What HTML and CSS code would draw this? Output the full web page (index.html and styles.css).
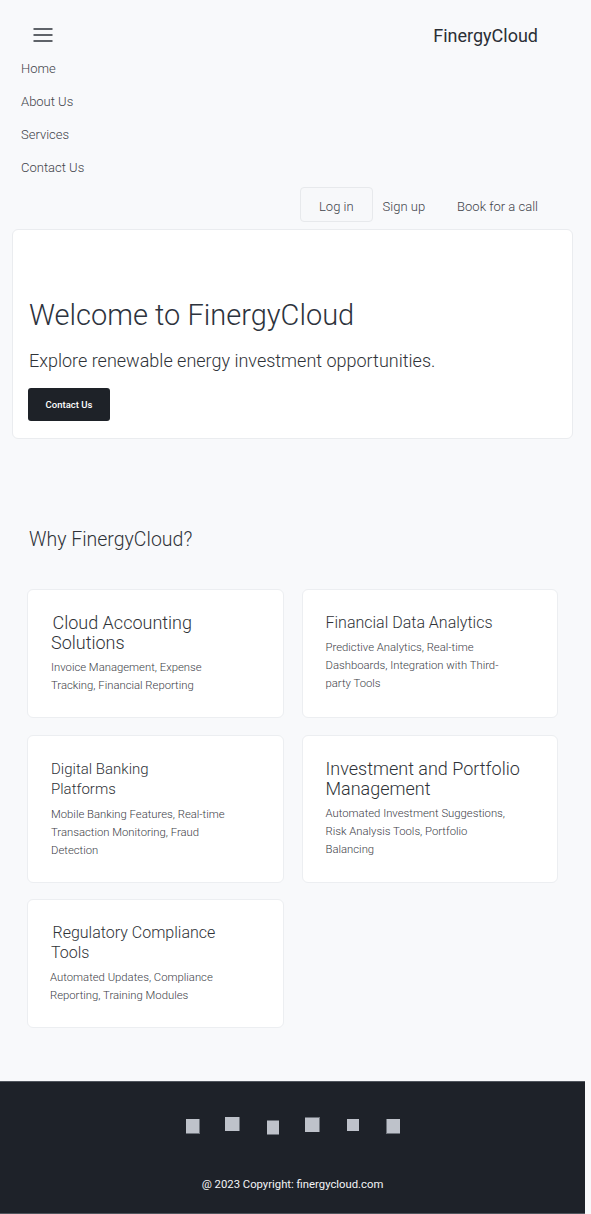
FILE: index.html
```html
<!DOCTYPE html>
<html lang="en">
<head>
<meta charset="utf-8">
<title>FinergyCloud</title>
<link rel="stylesheet" href="styles.css">
</head>
<body>
<header class="topbar">
  <button class="burger" aria-label="Menu">
    <svg width="20" height="16" viewBox="0 0 20 16"><path d="M0.5 2h19M0.5 8h19M0.5 14h19" stroke="#5f6369" stroke-width="1.8" fill="none"/></svg>
  </button>
  <div class="brand">FinergyCloud</div>
</header>
<nav class="menu">
  <a href="#">Home</a>
  <a href="#">About Us</a>
  <a href="#">Services</a>
  <a href="#">Contact Us</a>
</nav>
<div class="actions">
  <a class="act act-login" href="#">Log in</a>
  <a class="act act-signup" href="#">Sign up</a>
  <a class="act act-book" href="#">Book for a call</a>
</div>
<section class="hero">
  <h1>Welcome to FinergyCloud</h1>
  <p>Explore renewable energy investment opportunities.</p>
  <a class="hero-btn" href="#">Contact Us</a>
</section>
<section class="why">
  <h2>Why FinergyCloud?</h2>
  <div class="grid">
    <div class="card">
      <h3 class="t-lg"><span class="ind">Cloud Accounting</span><br>Solutions</h3>
      <p>Invoice Management, Expense<br>Tracking, Financial Reporting</p>
    </div>
    <div class="card">
      <h3 class="t-md">Financial Data Analytics</h3>
      <p>Predictive Analytics, Real-time<br>Dashboards, Integration with Third-<br>party Tools</p>
    </div>
    <div class="card">
      <h3 class="t-sm">Digital Banking<br>Platforms</h3>
      <p>Mobile Banking Features, Real-time<br>Transaction Monitoring, Fraud<br>Detection</p>
    </div>
    <div class="card">
      <h3 class="t-lg">Investment and Portfolio<br>Management</h3>
      <p>Automated Investment Suggestions,<br>Risk Analysis Tools, Portfolio<br>Balancing</p>
    </div>
    <div class="card">
      <h3 class="t-md"><span class="ind">Regulatory Compliance</span><br>Tools</h3>
      <p class="shift">Automated Updates, Compliance<br>Reporting, Training Modules</p>
    </div>
  </div>
</section>
<footer class="footer">
  <div class="icons">
    <span class="ic ic1"></span>
    <span class="ic ic2"></span>
    <span class="ic ic3"></span>
    <span class="ic ic4"></span>
    <span class="ic ic5"></span>
    <span class="ic ic6"></span>
  </div>
  <div class="copy">@ 2023 Copyright: finergycloud.com</div>
</footer>
</body>
</html>
```
FILE: styles.css
```css
* { box-sizing: border-box; }
html, body { margin: 0; padding: 0; }
body {
  background: #f8f9fb;
  font-family: Roboto, "Liberation Sans", sans-serif;
  font-weight: 300;
  color: #3a3e45;
  width: 591px;
}
a { text-decoration: none; color: inherit; }

.topbar {
  display: flex;
  justify-content: space-between;
  align-items: flex-start;
  height: 52px;
  padding: 22px 53px 0 30px;
}
.burger {
  width: 26px;
  height: 26px;
  padding: 0;
  border: none;
  background: transparent;
  display: flex;
  align-items: center;
  justify-content: center;
}
.burger svg { display: block; }
.brand {
  margin-top: 2px;
  font-size: 18px;
  line-height: 24px;
  font-weight: 400;
  color: #2b2f36;
}

.menu {
  display: flex;
  flex-direction: column;
  padding-left: 21px;
}
.menu a {
  font-size: 13px;
  line-height: 33px;
  height: 33px;
  color: #3f434a;
  font-weight: 300;
}

.actions {
  display: flex;
  justify-content: flex-end;
  align-items: flex-start;
  padding-right: 52px;
  margin-top: 3px;
  font-size: 13px;
  font-weight: 300;
  color: #3f434a;
}
.act {
  height: 35px;
  padding-top: 5px;
  line-height: 28px;
  border: 1px solid transparent;
}
.act-login {
  padding-left: 18px;
  padding-right: 18px;
  border-color: #e7e9ec;
  border-radius: 4px;
  background: #f7f8fa;
}
.act-signup { margin-left: 9px; }
.act-book { margin-left: 30px; }

.hero {
  margin: 7px 18px 0 12px;
  background: #fff;
  border: 1px solid #eaecef;
  border-radius: 6px;
  padding: 67px 16px 17px;
}
.hero h1 {
  margin: 0;
  font-size: 29px;
  font-weight: 300;
  line-height: 36px;
  color: #2d333d;
}
.hero p {
  margin: 16px 0 0;
  font-size: 18px;
  line-height: 24px;
  font-weight: 300;
  color: #2f3338;
}
.hero-btn {
  display: block;
  margin-top: 15px;
  margin-left: -1px;
  width: 82px;
  height: 33px;
  line-height: 33px;
  text-align: center;
  background: #1e2228;
  color: #fff;
  border-radius: 3px;
  font-size: 9.5px;
  font-weight: 500;
}

.why {
  padding: 0 0 0 27px;
}
.why h2 {
  margin: 89px 0 0 2px;
  font-size: 19.5px;
  line-height: 24px;
  font-weight: 300;
  color: #2f3338;
}
.grid {
  margin-top: 37px;
  display: grid;
  grid-template-columns: 256.5px 256.5px;
  column-gap: 18px;
  row-gap: 16.5px;
}
.card {
  background: #fff;
  border: 1px solid #eceef1;
  border-radius: 6px;
  padding: 23px 22px 22px 23px;
}
.card h3 {
  margin: 0;
  font-size: 17px;
  line-height: 20px;
  font-weight: 300;
  color: #2f3338;
}
.card h3 .ind { margin-left: 1.5px; }
.card h3.t-lg { font-size: 18px; line-height: 20px; }
.card h3.t-md { font-size: 16px; line-height: 20px; }
.card h3.t-sm { font-size: 15px; line-height: 20.5px; }
.card p {
  margin: 6px 0 0;
  font-size: 11.3px;
  line-height: 18px;
  font-weight: 300;
  color: #3c4047;
}
.card p.shift { margin-left: -1px; }

.footer {
  margin-top: 53px;
  width: 585px;
  height: 133px;
  background: #1e2229;
  border-top: 1px solid #50555d;
  border-bottom: 1px solid #50555d;
  padding-top: 35px;
}
.icons {
  display: flex;
  justify-content: center;
  align-items: flex-start;
  height: 18px;
}
.ic {
  display: block;
  width: 40px;
}
.ic::before {
  content: "";
  display: block;
  margin: 0 auto;
  background: #bec2ca;
}
.ic1::before { width: 13px; height: 14px; margin-top: 2px; border-right: 1px solid #6d727a; border-bottom: 1px solid #6d727a; }
.ic2::before { width: 14px; height: 14px; margin-top: 0; border-right: 1px solid #6d727a; }
.ic3::before { width: 12px; height: 13px; margin-top: 3px; border-top: 1px solid #6d727a; border-bottom: 1px solid #6d727a; }
.ic4::before { width: 14px; height: 14px; margin-top: 0; border-right: 1px solid #6d727a; border-top: 1px solid #6d727a; }
.ic5::before { width: 12px; height: 12px; margin-top: 2px; }
.ic6::before { width: 13px; height: 14px; margin-top: 2px; border-left: 1px solid #6d727a; border-bottom: 1px solid #6d727a; }
.copy {
  margin-top: 43px;
  text-align: center;
  font-size: 11.3px;
  font-weight: 400;
  color: #f3f4f6;
  line-height: 14px;
}
```
